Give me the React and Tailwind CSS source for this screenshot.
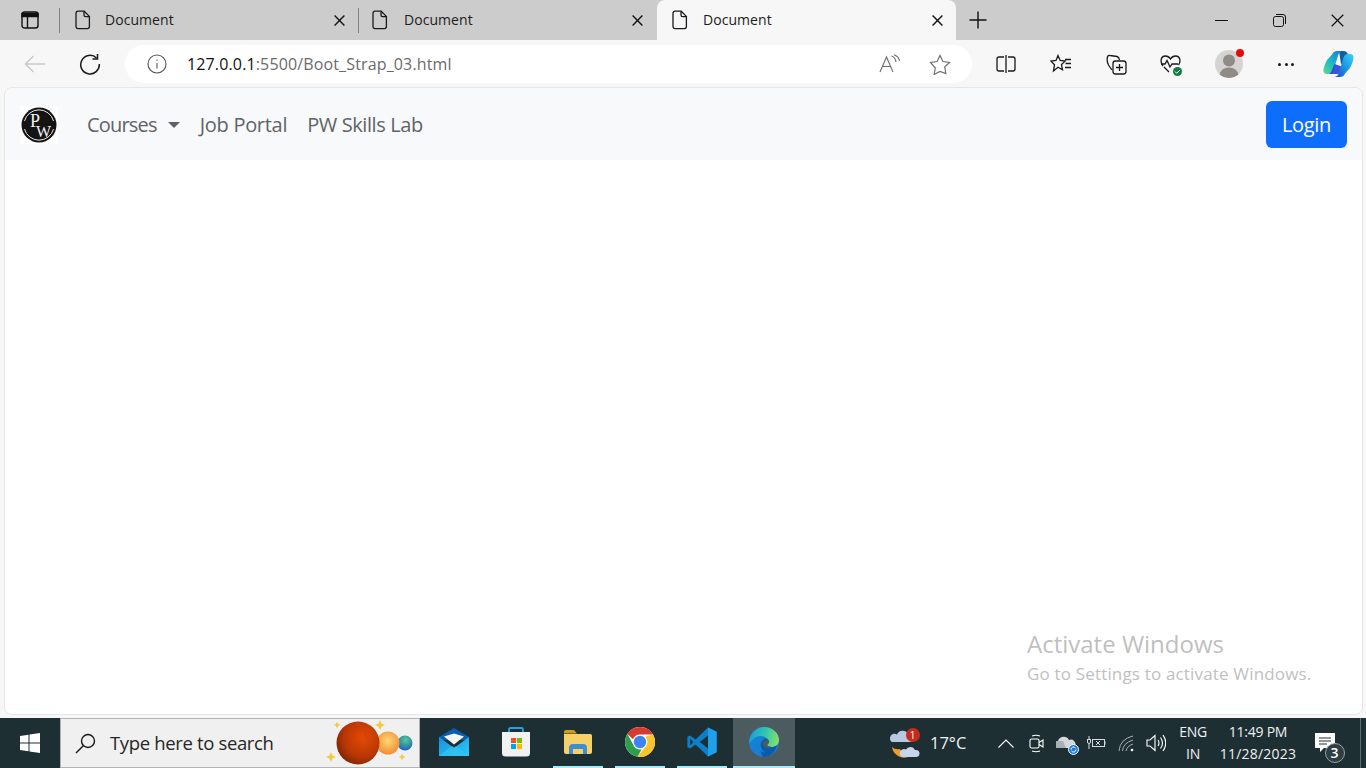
import React from "react";

const FONT = "font-['Open_Sans','Noto_Sans',sans-serif]";

// ---------- browser icons ----------
const DocIcon = () => (
  <svg width="16" height="20" viewBox="0 0 16 20" fill="none" stroke="#1a1a1a" strokeWidth="1.3">
    <path d="M3 1.2h6.2L14.4 6.4V16.6a2 2 0 0 1-2 2H3a2 2 0 0 1-2-2V3.2a2 2 0 0 1 2-2z" />
    <path d="M9 1.4V5a1.6 1.6 0 0 0 1.6 1.6h3.6" />
  </svg>
);

const CloseX = ({ size = 11, w = 1.4 }) => (
  <svg width={size} height={size} viewBox="0 0 11 11" stroke="#111" strokeWidth={w}>
    <path d="M.6.6l9.8 9.8M10.4.6L.6 10.4" />
  </svg>
);

const TabTitle = ({ gap }) => (
  <span className={`${gap} mb-[2px] text-[14px] text-[#1c1c1c] tracking-[0.05px]`}>Document</span>
);

const ToolCell = ({ w, children }) => (
  <div className={`${w} flex items-center justify-center shrink-0`}>{children}</div>
);

// ---------- taskbar icons ----------
const MailIcon = () => (
  <svg width="30" height="28" viewBox="0 0 30 28">
    <defs>
      <linearGradient id="mailA" x1="0" y1="0" x2="1" y2="1">
        <stop offset="0" stopColor="#1590dc" />
        <stop offset="1" stopColor="#2dcbf6" />
      </linearGradient>
    </defs>
    <path d="M0 9L15 0l15 9v3H0z" fill="#0a5db0" />
    <path d="M5 8.500L15 5.500l10 3-10 8z" fill="#f4f6f8" />
    <path d="M0 9l15 11L30 9v19H0z" fill="url(#mailA)" />
    <path d="M0 28l13-10 2 1.500 2-1.500 13 10z" fill="#36c6f4" opacity=".65" />
  </svg>
);

const StoreIcon = () => (
  <svg width="30" height="30" viewBox="0 0 30 30">
    <path d="M8 6V2.500Q8 1 9.500 1h11Q22 1 22 2.500V6" fill="none" stroke="#1fa5e6" strokeWidth="1.800" />
    <path d="M1 5h28v21a3.500 3.500 0 0 1-3.500 3.500h-21A3.500 3.500 0 0 1 1 26z" fill="#f1f1f1" />
    <rect x="10" y="11" width="5" height="5" fill="#f25022" />
    <rect x="16" y="11" width="5" height="5" fill="#7fba00" />
    <rect x="10" y="17" width="5" height="5" fill="#00a4ef" />
    <rect x="16" y="17" width="5" height="5" fill="#ffb900" />
  </svg>
);

const FolderIcon = () => (
  <svg width="28" height="24" viewBox="0 0 28 24">
    <path d="M0 2q0-2 2-2h8l3 3.500H0z" fill="#d19c12" />
    <path d="M0 4h26.500q1.500 0 1.500 1.500V22q0 2-2 2H2q-2 0-2-2z" fill="#f6d167" />
    <path d="M5 24v-6q0-4 4-4h10q4 0 4 4v6h-4v-5H9v5z" fill="#3d8fd0" />
  </svg>
);

const ChromeIcon = () => (
  <svg width="30" height="30" viewBox="0 0 30 30">
    <circle cx="15" cy="15" r="15" fill="#fff" />
    <path d="M15 0a15 15 0 0 1 13 7.500H15a7.500 7.500 0 0 0-7 4.800L2.400 6.900A15 15 0 0 1 15 0z" fill="#d93a2e" />
    <path d="M2.400 6.900L8.800 18.700A7.500 7.500 0 0 0 16.500 22.400L12.600 29.800A15 15 0 0 1 2.400 6.900z" fill="#2e9e4b" />
    <path d="M28 7.500A15 15 0 0 1 12.600 29.800L19.300 21A7.500 7.500 0 0 0 20.300 9.700z" fill="#f8c52c" />
    <circle cx="15" cy="15" r="6.200" fill="#3f83ee" />
  </svg>
);

const VsCodeIcon = () => (
  <svg width="30" height="30" viewBox="0 0 30 30">
    <path d="M21 .6L29.600 4.800V25.200L21 29.400 8.500 17.500 3.200 21.600.4 20.200V9.800L3.200 8.400 8.500 12.500z" fill="#0d7fc9" />
    <path d="M21 .6L29.600 4.800V25.200L21 29.400z" fill="#1fa0ea" />
    <path d="M21 8.500L12.800 15 21 21.500z" fill="#1e2f34" />
    <path d="M3.200 11.500L6.300 15 3.200 18.500z" fill="#1e2f34" />
  </svg>
);

const EdgeIcon = () => (
  <svg width="30" height="30" viewBox="0 0 30 30">
    <defs>
      <linearGradient id="edgeA" x1="0" y1=".3" x2="1" y2=".5">
        <stop offset="0" stopColor="#1b9bdc" />
        <stop offset=".5" stopColor="#2fc4b0" />
        <stop offset="1" stopColor="#84e06a" />
      </linearGradient>
    </defs>
    <circle cx="15" cy="15" r="15" fill="#1580d4" />
    <path d="M15 0c8.500 0 15 6 15 13 0 4.500-3.500 7-7.500 7-2.500 0-4.500-1-4.500-2.300 2-1.200 2.300-3.400.8-5.400C16.500 9 11 8 6.500 10.500 3.500 12.200 1 15 0 17 0 7 7 0 15 0z" fill="url(#edgeA)" />
    <path d="M11 18c0-4 2.500-7 7-6.500 1.800 1.800 1.800 4.800 0 6.200 0 1.300 2 2.300 4.500 2.300 2 0 4-.6 5.500-1.800C26.500 25 21 30 15 30c-2.500 0-3.800-8-4-12z" fill="#0d5aa7" />
    <path d="M18 11.500c-4 .5-6.300 3-6.300 6.500 0 3 1.600 6 5 7.300-4.500.5-8-2.800-8.700-6.800-.6-4 2.500-7.500 10-7z" fill="#1580d4" />
    <path d="M19.500 12.800c1.200 2 .8 3.800-1.500 4.900.2 1.200 2 2.300 4.500 2.300-3.500 1.500-8.300.4-8.800-3 0-2.800 2.800-5 5.800-4.200z" fill="#4c5b5f" />
  </svg>
);

const Star = ({ x, y, r }) => (
  <path
    d={`M${x} ${y - r}L${x + r * 0.3} ${y - r * 0.3}L${x + r} ${y}L${x + r * 0.3} ${y + r * 0.3}L${x} ${y + r}L${x - r * 0.3} ${y + r * 0.3}L${x - r} ${y}L${x - r * 0.3} ${y - r * 0.3}z`}
    fill="#f4c93e"
  />
);

// ---------- search box picture ----------
const Planets = () => (
  <svg width="88" height="46" viewBox="0 0 88 46">
    <defs>
      <radialGradient id="marsA" cx=".62" cy=".38" r=".75">
        <stop offset="0" stopColor="#e54a04" />
        <stop offset=".6" stopColor="#b83604" />
        <stop offset="1" stopColor="#6a2206" />
      </radialGradient>
      <radialGradient id="sunA" cx=".5" cy=".4" r=".6">
        <stop offset="0" stopColor="#ffd77a" />
        <stop offset="1" stopColor="#ef8e2e" />
      </radialGradient>
      <radialGradient id="earthA" cx=".55" cy=".3" r=".75">
        <stop offset="0" stopColor="#4fd08e" />
        <stop offset="1" stopColor="#1d58c4" />
      </radialGradient>
    </defs>
    <Star x={11} y={5} r={3.5} />
    <Star x={54} y={5} r={5} />
    <Star x={5} y={37} r={5} />
    <Star x={76} y={37} r={3.5} />
    <circle cx="79" cy="23" r="7.500" fill="url(#earthA)" />
    <circle cx="62" cy="23" r="11.500" fill="url(#sunA)" />
    <circle cx="32" cy="23" r="21.500" fill="url(#marsA)" />
    <path d="M30 3q8 4 9 11t8 7" fill="none" stroke="#cf4306" strokeWidth="2" opacity=".7" />
  </svg>
);

const PwLogo = () => (
  <div className="w-[38px] h-[38px] mt-px bg-white flex items-center justify-center shrink-0">
    <svg width="36" height="36" viewBox="0 0 36 36">
      <circle cx="18" cy="18" r="17.500" fill="#141414" />
      <path d="M3.500 14A15 15 0 0 1 32.500 14M32.500 22A15 15 0 0 1 3.500 22" fill="none" stroke="#e8e8e8" strokeWidth="1" />
      <text x="9" y="20" fontFamily="Liberation Serif, serif" fontSize="18" fill="#f2f2f2">P</text>
      <text x="15" y="30" fontFamily="Liberation Serif, serif" fontSize="16" fill="#f2f2f2">W</text>
    </svg>
  </div>
);

const TaskCell = ({ active, lit, children }) => (
  <div className={`w-[62px] h-full flex flex-col shrink-0 ${active ? "bg-[#4c5b5f]" : ""}`}>
    <div className="flex-1 flex items-center justify-center">{children}</div>
    <div className={`h-[2px] ${active ? "bg-[#a8ecf7]" : lit ? "bg-[#a8ecf7] mx-[6px]" : ""}`} />
  </div>
);

const TrayCell = ({ children }) => (
  <div className="w-[30px] flex items-center justify-center shrink-0">{children}</div>
);

export default function App() {
  return (
    <div className={`w-[1366px] h-[768px] overflow-hidden flex flex-col bg-[#f7f7f7] ${FONT}`}>
      {/* tab strip */}
      <div className="h-10 bg-[#cccccc] flex items-center shrink-0">
        <div className="w-[59px] h-full flex items-center justify-center shrink-0">
          <svg width="18" height="18" viewBox="0 0 18 18" fill="none" stroke="#111" strokeWidth="1.400">
            <rect x="1" y="1" width="16" height="16" rx="2.500" />
            <path d="M1 2.500h16V5.500H1z" fill="#111" />
            <path d="M6.500 5.500V17" />
          </svg>
        </div>
        <div className="h-full flex items-stretch">
          <div className="flex items-center"><div className="w-px h-[25px] bg-[#808080]" /></div>
          <div className="w-[298px] pl-[15px] pr-[13px] flex items-center">
            <DocIcon />
            <TabTitle gap="ml-[14px]" />
            <span className="ml-auto flex"><CloseX /></span>
          </div>
          <div className="flex items-center"><div className="w-px h-[25px] bg-[#808080]" /></div>
          <div className="w-[298px] pl-[13px] pr-[14px] flex items-center">
            <DocIcon />
            <TabTitle gap="ml-[16px]" />
            <span className="ml-auto flex"><CloseX /></span>
          </div>
          <div className="w-[299px] bg-[#f7f7f7] rounded-t-lg pl-[15px] pr-[13px] flex items-center">
            <DocIcon />
            <TabTitle gap="ml-[15px]" />
            <span className="ml-auto flex"><CloseX /></span>
          </div>
        </div>
        <div className="w-[44px] flex items-center justify-center shrink-0">
          <svg width="18" height="18" viewBox="0 0 18 18" stroke="#111" strokeWidth="1.400">
            <path d="M9 .5v17M.5 9h17" />
          </svg>
        </div>
        {/* window controls */}
        <div className="ml-auto flex items-center h-full">
          <div className="w-[58px] flex justify-center"><div className="w-[13px] h-px bg-[#111]" /></div>
          <div className="w-[58px] flex justify-center">
            <svg width="13" height="13" viewBox="0 0 13 13" fill="none" stroke="#111" strokeWidth="1">
              <rect x=".5" y="2.500" width="10" height="10" rx="2" />
              <path d="M3 .5h7a2.500 2.500 0 0 1 2.500 2.500v7" />
            </svg>
          </div>
          <div className="w-[58px] flex justify-center"><CloseX size={13} w={1} /></div>
        </div>
      </div>

      {/* toolbar */}
      <div className="h-[48px] flex items-center shrink-0">
        <ToolCell w="w-[70px]">
          <svg width="22" height="18" viewBox="0 0 22 18" fill="none" stroke="#c9c9c9" strokeWidth="1.500">
            <path d="M21 9H1.500M9.500 1L1.500 9l8 8" />
          </svg>
        </ToolCell>
        <ToolCell w="w-[40px]">
          <svg width="22" height="22" viewBox="0 0 22 22" fill="none" stroke="#1a1a1a" strokeWidth="1.500">
            <path d="M17.500 5A9.300 9.300 0 1 0 20.300 11" />
            <path d="M18.500 1v5h-5" />
          </svg>
        </ToolCell>
        <div className="ml-[15px] w-[847px] h-[38px] bg-white rounded-full flex items-center shrink-0">
          <svg className="ml-[22px]" width="20" height="20" viewBox="0 0 20 20" fill="none" stroke="#555" strokeWidth="1.100">
            <circle cx="10" cy="10" r="9" />
            <path d="M10 9v5.500M10 5.500v1.300" />
          </svg>
          <span className="ml-[20px] text-[16px] tracking-[0.14px] text-[#6b6b6b]">
            <span className="text-[#111]">127.0.0.1</span>:5500/Boot_Strap_03.html
          </span>
          <div className="ml-auto mr-[21px] flex items-center gap-[29px]">
            <svg width="21" height="20" viewBox="0 0 21 20" fill="none" stroke="#6f6f6f" strokeWidth="1.100">
              <path d="M1 18L7.500 3 14 18M3.500 12.500h8" />
              <path d="M12.500 2q4 1.500 4.500 6M15 .8q4.500 1.500 5.500 6" />
            </svg>
            <svg width="22" height="21" viewBox="0 0 22 21" fill="none" stroke="#6f6f6f" strokeWidth="1.200">
              <path d="M11 1.500l2.900 6 6.600.9-4.800 4.600 1.200 6.500L11 17.400l-5.900 3.100 1.200-6.500L1.500 8.400l6.600-.9z" />
            </svg>
          </div>
        </div>
        {/* right side icons */}
        <ToolCell w="w-[6px]" />
        <ToolCell w="w-[55px]">
          <svg width="20" height="20" viewBox="0 0 20 20" fill="none" stroke="#1a1a1a" strokeWidth="1.300">
            <path d="M8 3H3a2 2 0 0 0-2 2v10a2 2 0 0 0 2 2h5M12 3h5a2 2 0 0 1 2 2v10a2 2 0 0 1-2 2h-5M10 1v18" />
          </svg>
        </ToolCell>
        <ToolCell w="w-[56px]">
          <svg width="22" height="21" viewBox="0 0 22 21" fill="none" stroke="#1a1a1a" strokeWidth="1.300">
            <path d="M8 1.500l2.200 5 5 .6-3.700 3.500 1 5.200L8 13.200l-4.500 3.700 1-6.200L1 7.100l5-.6z" />
            <path d="M15 5.500h6M15.500 9.500h5.500M15 13.500h6" />
          </svg>
        </ToolCell>
        <ToolCell w="w-[54px]">
          <svg width="21" height="21" viewBox="0 0 21 21" fill="none" stroke="#1a1a1a" strokeWidth="1.300">
            <path d="M6 16L2.500 11Q.5 7 1.500 3 2 1 4 1.500L11 2.500Q13 3 13.500 6" />
            <rect x="7" y="7" width="13" height="13" rx="2.500" />
            <path d="M13.500 10v7M10 13.500h7" />
          </svg>
        </ToolCell>
        <ToolCell w="w-[55px]">
          <div className="relative w-[21px] h-[21px]">
            <svg width="21" height="21" viewBox="0 0 21 21" fill="none" stroke="#1a1a1a" strokeWidth="1.300">
              <path d="M3 12Q1 9.500 1 6.500 1.500 2 5.500 2 8.500 2 10.500 5 12.500 2 15.500 2 19.500 2 20 6.500 20 9 18.500 11" />
              <path d="M1 10h4l2-3.500 3 6.500 2-3h6M4 13l5 5" />
            </svg>
            <span className="absolute -right-[1px] -bottom-[1px] w-[9px] h-[9px] rounded-full bg-[#107c41] flex items-center justify-center">
              <svg width="7" height="7" viewBox="0 0 7 7" fill="none" stroke="#fff" strokeWidth="1"><path d="M1 3.500l1.700 1.700L6 2" /></svg>
            </span>
          </div>
        </ToolCell>
        <ToolCell w="w-[61px]">
          <div className="relative w-[28px] h-[28px] rounded-full bg-[#d6d4d2] overflow-visible">
            <svg width="28" height="28" viewBox="0 0 28 28" className="rounded-full">
              <circle cx="14" cy="10.500" r="6" fill="#8f8b87" />
              <path d="M4.500 25Q6 17.500 14 17.500T23.500 25Q19.500 28 14 28T4.500 25z" fill="#8f8b87" />
            </svg>
            <span className="absolute right-[-1px] top-[-1px] w-[8px] h-[8px] rounded-full bg-[#e60a0a]" />
          </div>
        </ToolCell>
        <ToolCell w="w-[54px]">
          <div className="flex gap-[3.500px]">
            <span className="w-[3px] h-[3px] rounded-full bg-[#1a1a1a]" />
            <span className="w-[3px] h-[3px] rounded-full bg-[#1a1a1a]" />
            <span className="w-[3px] h-[3px] rounded-full bg-[#1a1a1a]" />
          </div>
        </ToolCell>
        <ToolCell w="w-[50px]">
          <svg width="31" height="28" viewBox="0 0 31 28">
            <defs>
              <linearGradient id="copA" x1="0" y1="1" x2=".7" y2="0">
                <stop offset="0" stopColor="#63d98b" />
                <stop offset=".5" stopColor="#1dbcc4" />
                <stop offset="1" stopColor="#1b86d8" />
              </linearGradient>
              <linearGradient id="copB" x1="0" y1="1" x2="1" y2=".1">
                <stop offset="0" stopColor="#2347d2" />
                <stop offset=".55" stopColor="#1a98e6" />
                <stop offset="1" stopColor="#3ccff0" />
              </linearGradient>
            </defs>
            <path d="M16 1h4.500q3.500 0 4.500 3.500L27 11l-9 3z" fill="#0f5f9e" />
            <path d="M9 4.500Q10.500 1 14 1h6q-3.500 0-4.800 4L10.500 20.500Q9.500 24 6 24H4Q0 24 .5 19.500 1 16 4 10z" fill="url(#copA)" />
            <path d="M6 24h9q3 0 4-3l1.500-4-9-3-3 7q-.5 2-2.500 3z" fill="#2546cf" opacity=".9" />
            <path d="M22 23.500Q20.500 27 17 27h-6q3.500 0 4.800-4L20.500 7.500Q21.500 4 25 4h2q4 0 3.500 4.500Q30 12 27 18z" fill="url(#copB)" />
          </svg>
        </ToolCell>
      </div>

      {/* page */}
      <div className="flex-1 min-h-0 pl-[4px] pr-[3px] pb-[3px] bg-[#f7f7f7]">
        <div className="relative h-[calc(100%+1px)] -mt-px bg-white rounded-lg border border-[#e6e6e6] overflow-hidden">
          <nav className="h-[72px] bg-[#f8f9fa] flex items-center pl-[15px] pr-[15px]">
            <PwLogo />
            <div className="ml-[29px] pt-[2px] flex items-center text-[20px] text-[#5f6368]">
              <span className="tracking-[-0.8px]">Courses</span>
              <span className="ml-[11px] w-0 h-0 border-x-[6px] border-x-transparent border-t-[6px] border-t-[#5f6368]" />
              <span className="ml-[20px] tracking-[-0.3px]">Job Portal</span>
              <span className="ml-[20px] tracking-[-0.4px]">PW Skills Lab</span>
            </div>
            <button className="ml-auto w-[81px] h-[47px] pt-[2px] bg-[#0d6efd] text-white text-[20px] rounded-md tracking-[-0.3px]">
              Login
            </button>
          </nav>
          <div className="absolute left-[1022px] top-[539px] text-[#bfbfbf] whitespace-nowrap">
            <div className="text-[24px] leading-[34px]">Activate Windows</div>
            <div className="text-[17px] leading-[26px] tracking-[0.17px]">Go to Settings to activate Windows.</div>
          </div>
        </div>
      </div>

      {/* taskbar */}
      <div className="h-[50px] bg-[#1e2f34] flex items-stretch shrink-0">
        <div className="w-[60px] flex items-center justify-center shrink-0">
          <svg width="20" height="20" viewBox="0 0 20 20" fill="#fff">
            <path d="M0 3l8.500-1.200V9.500H0zM9.500 1.600L20 0v9.500H9.500zM0 10.500h8.500v7.700L0 17zM9.500 10.500H20V20L9.500 18.400z" />
          </svg>
        </div>
        <div className="w-[360px] bg-[#f0f0f0] border border-[#b4b4b4] flex items-center shrink-0 pl-[14px]">
          <svg width="21" height="21" viewBox="0 0 21 21" fill="none" stroke="#1a1a1a" strokeWidth="1.400">
            <circle cx="13" cy="8" r="6.500" />
            <path d="M8.500 12.500L1 20" />
          </svg>
          <span className="ml-[14px] text-[18.500px] tracking-[-0.35px] text-[#262626]">Type here to search</span>
          <div className="ml-auto mr-[5px] flex"><Planets /></div>
        </div>
        <div className="ml-[3px] flex h-full">
          <TaskCell><MailIcon /></TaskCell>
          <TaskCell><StoreIcon /></TaskCell>
          <TaskCell lit><FolderIcon /></TaskCell>
          <TaskCell lit><ChromeIcon /></TaskCell>
          <TaskCell lit><VsCodeIcon /></TaskCell>
          <TaskCell active><EdgeIcon /></TaskCell>
        </div>

        {/* tray */}
        <div className="ml-auto flex items-stretch text-white">
          <div className="w-[40px] flex items-center justify-center shrink-0">
            <div className="relative w-[31px] h-[29px] mr-[2px]">
              <svg width="31" height="29" viewBox="0 0 31 29">
                <path d="M3 13h18a4 4 0 0 0 0-8h-2A6 6 0 0 0 8 5.500 4 4 0 0 0 3 13z" fill="#b8c8e0" />
                <path d="M3 18q3 3 8 2 3 8 12 6-7 5-14 1-5-3-6-9z" fill="#f39c26" />
                <path d="M13 28h14a3.500 3.500 0 0 0 0-7h-1A5 5 0 0 0 17 20.500 3.500 3.500 0 0 0 13 28z" fill="#c6d6ea" />
              </svg>
              <span className="absolute -top-[1px] right-[0px] w-[14px] h-[14px] rounded-full bg-[#c42b1c] text-white text-[10px] leading-[14px] text-center">1</span>
            </div>
          </div>
          <div className="w-[66px] flex items-center pl-[5px] text-[16.500px] text-[#eef1f2] shrink-0">17°C</div>
          <TrayCell>
            <svg width="16" height="9" viewBox="0 0 16 9" fill="none" stroke="#fff" strokeWidth="1.100"><path d="M.5 8.500L8 1l7.500 7.500" /></svg>
          </TrayCell>
          <TrayCell>
            <svg width="15" height="19" viewBox="0 0 15 19" fill="none" stroke="#fff" strokeWidth="1.100">
              <rect x="1" y="5" width="9" height="9" rx="1.500" />
              <path d="M10 8.500l4-2.500v7l-4-2.500M3 2q4-1.500 8 0M3 17q4 1.500 8 0" />
            </svg>
          </TrayCell>
          <TrayCell>
            <div className="relative w-[21px] h-[18px]">
              <svg width="21" height="18" viewBox="0 0 21 18">
                <path d="M2 14a3.500 3.500 0 0 1 0-7 6 6 0 0 1 11-1 4.500 4.500 0 0 1 6 6v2z" fill="#d5d8da" />
                <path d="M2 14a3.500 3.500 0 0 1 0-7h5l3 7z" fill="#a9afb2" />
              </svg>
              <span className="absolute right-[-2px] bottom-[-3px] w-[11px] h-[11px] rounded-full bg-[#1d7bd6] border border-white flex items-center justify-center">
                <svg width="7" height="7" viewBox="0 0 7 7" fill="none" stroke="#fff" strokeWidth="1"><path d="M1 3.500a2.500 2.500 0 0 1 4.500-1.500M6 3.500a2.500 2.500 0 0 1-4.500 1.500" /></svg>
              </span>
            </div>
          </TrayCell>
          <TrayCell>
            <svg width="20" height="16" viewBox="0 0 20 16" fill="none" stroke="#d8dcdd" strokeWidth="1">
              <rect x="6.500" y="4.500" width="12" height="7" />
              <path d="M19 6.500v3M1 4.500h4M3 1v3M1.500 4.500v2.500a1.500 1.500 0 0 0 3 0V4.500M3 9v5M10 6l4 4M14 6l-4 4" />
            </svg>
          </TrayCell>
          <TrayCell>
            <svg width="17" height="17" viewBox="0 0 17 17" fill="none" stroke="#a9b0b2" strokeWidth="1">
              <path d="M1 16Q2 4 15 1M4.500 16Q5 8 15 5M8 16Q9 11 15 9" />
              <circle cx="14" cy="15" r="1.300" fill="#fff" stroke="none" />
            </svg>
          </TrayCell>
          <TrayCell>
            <svg width="20" height="18" viewBox="0 0 20 18" fill="none" stroke="#fff" strokeWidth="1.100">
              <path d="M1 6h3l5-4.500v15L4 12H1zM12 6q2 3 0 6M14.500 3.500q4 5.500 0 11M17 1q5.500 8 0 16" />
            </svg>
          </TrayCell>
          <div className="w-[44px] flex flex-col items-center justify-center text-[14px] leading-[22px] text-[#eef1f2] tracking-[-0.35px] shrink-0">
            <span>ENG</span>
            <span>IN</span>
          </div>
          <div className="w-[86px] flex flex-col items-center justify-center text-[14px] leading-[22px] text-[#eef1f2] shrink-0">
            <span className="tracking-[-0.25px]">11:49 PM</span>
            <span className="tracking-[0.2px]">11/28/2023</span>
          </div>
          <div className="w-[59px] flex items-center justify-center pr-[8px] shrink-0">
            <div className="relative w-[24px] h-[24px] mt-[3px]">
              <svg width="20" height="20" viewBox="0 0 20 20">
                <path d="M0 0h20v15H9l-4 4v-4H0z" fill="#fff" />
                <path d="M4 5h12M4 8h12M4 11h8" stroke="#1e2f34" strokeWidth="1" />
              </svg>
              <span className="absolute right-[-6px] bottom-[-6px] w-[20px] h-[20px] rounded-full bg-[#2f3e42] border border-[#9aa3a6] text-[14px] leading-[17px] text-center font-semibold text-white">3</span>
            </div>
          </div>
          <div className="w-px bg-[#5e6b6f] shrink-0" />
          <div className="w-[5px] shrink-0" />
        </div>
      </div>
    </div>
  );
}
